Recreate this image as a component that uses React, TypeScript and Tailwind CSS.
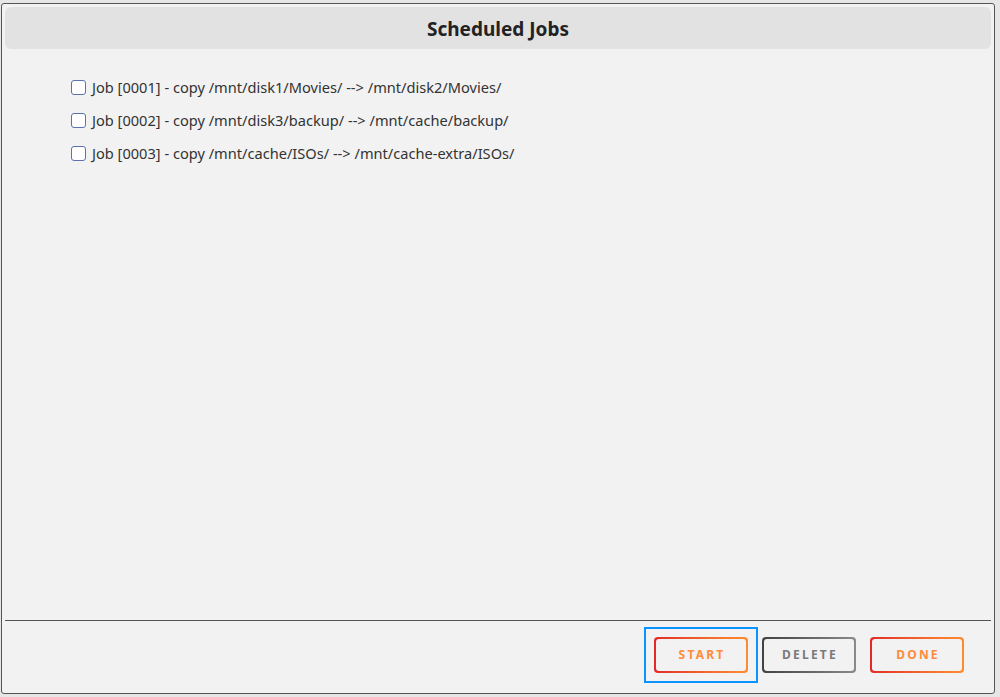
import React from 'react'

type Job = { id: string; src: string; dst: string }

const JOBS: Job[] = [
  { id: '0001', src: '/mnt/disk1/Movies/', dst: '/mnt/disk2/Movies/' },
  { id: '0002', src: '/mnt/disk3/backup/', dst: '/mnt/cache/backup/' },
  { id: '0003', src: '/mnt/cache/ISOs/', dst: '/mnt/cache-extra/ISOs/' },
]

function GradientButton({ label, tone }: { label: string; tone: 'warm' | 'gray' }) {
  const border =
    tone === 'warm'
      ? 'bg-gradient-to-r from-[#e22828] to-[#ff8c2f]'
      : 'bg-gradient-to-r from-[#424242] to-[#8a8a8a]'
  const text = tone === 'warm' ? 'text-[#ff8b3c]' : 'text-[#7a7a7a]'
  return (
    <div className={`${border} rounded-[4px] p-[2px] w-[94px] h-[36px]`}>
      <div className="w-full h-full bg-[#f2f2f2] rounded-[3px] flex items-center justify-center">
        <span className={`${text} text-[12px] font-bold tracking-[2.2px] pl-[2px]`}>{label}</span>
      </div>
    </div>
  )
}

export default function App() {
  return (
    <div className="w-[1000px] h-[697px] bg-[#e6e6e6] pt-[3px] pl-[1px] font-['Noto_Sans',sans-serif]">
      <div className="w-[994px] h-[691px] bg-[#f2f2f2] border border-[#555] rounded-[3px] flex flex-col">
        <div className="mx-[3px] mt-[3px] h-[42px] bg-[#e2e2e2] rounded-md flex items-center justify-center pt-[2px]">
          <h1 className="text-[19px] font-bold text-[#222]">Scheduled Jobs</h1>
        </div>

        <div className="flex-1 pt-[22px] pl-[69px]">
          {JOBS.map((job) => (
            <label key={job.id} className="flex items-center h-[33px] text-[14.6px] text-[#333]">
              <span className="w-[15px] h-[15px] border border-[#5a73b0] rounded-[3px] bg-white mr-[6px]" />
              Job [{job.id}] - copy {job.src} --&gt; {job.dst}
            </label>
          ))}
        </div>

        <div className="mx-[3px] border-t border-[#555]" />
        <div className="h-[72px] flex items-start justify-end pr-[30px] pt-[6px]">
          <div className="border-2 border-[#0a94ff] p-[8px] mr-[4px]">
            <GradientButton label="START" tone="warm" />
          </div>
          <div className="flex gap-[14px] pt-[10px]">
            <GradientButton label="DELETE" tone="gray" />
            <GradientButton label="DONE" tone="warm" />
          </div>
        </div>
      </div>
    </div>
  )
}
